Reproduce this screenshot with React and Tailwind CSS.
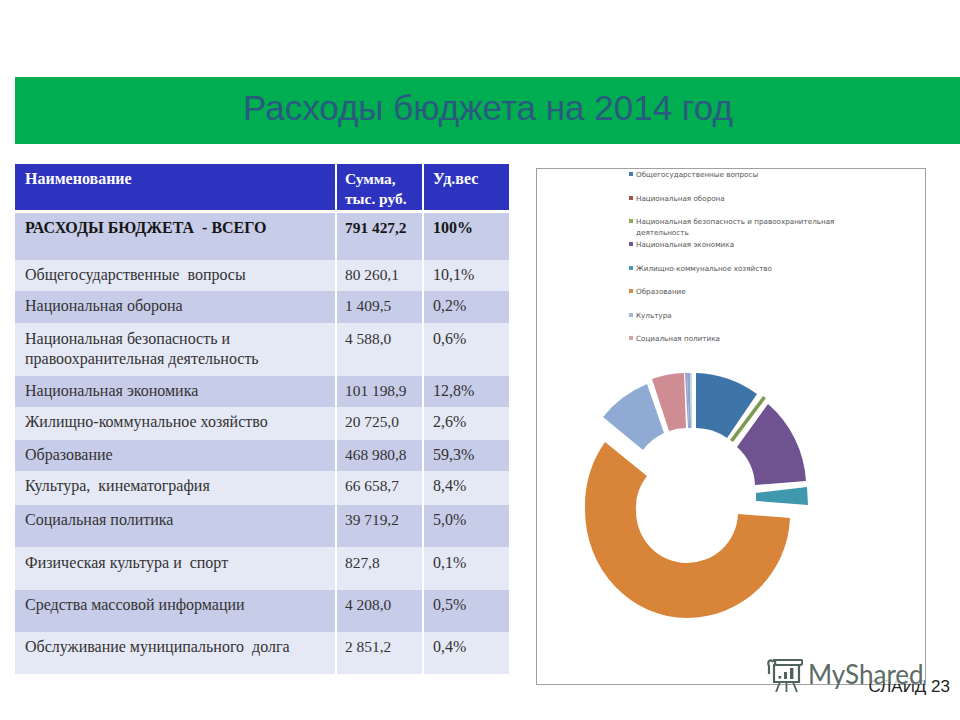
const rows = [
  { h: "h-[46px]", bg: "bg-[#2d33bf]", pt: "pt-[5px]", text: "text-white font-bold", cells: ["Наименование", "Сумма,\nтыс. руб.", "Уд.вес"] },
  { h: "h-[50px]", bg: "bg-[#c7cce8]", pt: "pt-[5px]", text: "text-[#161616] font-bold", border: "border-t-[3px]", cells: ["РАСХОДЫ БЮДЖЕТА  - ВСЕГО", "791 427,2", "100%"] },
  { h: "h-[31px]", bg: "bg-[#e5e8f5]", pt: "pt-[5px]", text: "text-[#333]", cells: ["Общегосударственные  вопросы", "80 260,1", "10,1%"] },
  { h: "h-[32px]", bg: "bg-[#c7cce8]", pt: "pt-[5px]", text: "text-[#333]", cells: ["Национальная оборона", "1 409,5", "0,2%"] },
  { h: "h-[53px]", bg: "bg-[#e5e8f5]", pt: "pt-[6px]", text: "text-[#333]", cells: ["Национальная безопасность и\nправоохранительная деятельность", "4 588,0", "0,6%"] },
  { h: "h-[31px]", bg: "bg-[#c7cce8]", pt: "pt-[5px]", text: "text-[#333]", cells: ["Национальная экономика", "101 198,9", "12,8%"] },
  { h: "h-[33px]", bg: "bg-[#e5e8f5]", pt: "pt-[5px]", text: "text-[#333]", cells: ["Жилищно-коммунальное хозяйство", "20 725,0", "2,6%"] },
  { h: "h-[31px]", bg: "bg-[#c7cce8]", pt: "pt-[5px]", text: "text-[#333]", cells: ["Образование", "468 980,8", "59,3%"] },
  { h: "h-[34px]", bg: "bg-[#e5e8f5]", pt: "pt-[5px]", text: "text-[#333]", cells: ["Культура,  кинематография", "66 658,7", "8,4%"] },
  { h: "h-[42px]", bg: "bg-[#c7cce8]", pt: "pt-[5px]", text: "text-[#333]", cells: ["Социальная политика", "39 719,2", "5,0%"] },
  { h: "h-[43px]", bg: "bg-[#e5e8f5]", pt: "pt-[6px]", text: "text-[#333]", cells: ["Физическая культура и  спорт", "827,8", "0,1%"] },
  { h: "h-[42px]", bg: "bg-[#c7cce8]", pt: "pt-[5px]", text: "text-[#333]", cells: ["Средства массовой информации", "4 208,0", "0,5%"] },
  { h: "h-[42px]", bg: "bg-[#e5e8f5]", pt: "pt-[5px]", text: "text-[#333]", cells: ["Обслуживание муниципального  долга", "2 851,2", "0,4%"] },
];

const cols = [
  "pl-[10px] text-[16px] border-r-2 border-white",
  "pl-[8px] text-[15.4px] border-r-2 border-white",
  "pl-[9px] text-[16px]",
];

const legend = [
  { c: "bg-[#4a7aa8]", t: "Общегосударственные вопросы", cls: "h-[23.5px]" },
  { c: "bg-[#a84f4c]", t: "Национальная оборона", cls: "h-[23.5px]" },
  { c: "bg-[#8fa85a]", t: "Национальная безопасность и правоохранительная\nдеятельность", cls: "h-[23px]" },
  { c: "bg-[#6f5a8c]", t: "Национальная экономика", cls: "h-[23.5px]" },
  { c: "bg-[#4b9bab]", t: "Жилищно-коммунальное хозяйство", cls: "h-[23.5px]" },
  { c: "bg-[#d9894a]", t: "Образование", cls: "h-[23.5px]" },
  { c: "bg-[#9fbbd6]", t: "Культура", cls: "h-[23.5px]" },
  { c: "bg-[#d6a3a3]", t: "Социальная политика", cls: "h-[16px]" },
];

function Donut() {
  return (
    <svg viewBox="575 365 240 260" className="block w-[240px] h-[260px] ml-[38px] mt-[16px]">
      <path fill="#3f74a8" d="M696 373 A110 110 0 0 1 757 394 L727 438 A54 54 0 0 0 696 428 Z" />
      <path fill="#7f9a50" d="M763 396 L766 398 L733 442 L730 440 Z" />
      <path fill="#6f5290" d="M768 404 A110 110 0 0 1 806 481 L755 485 A54 54 0 0 0 737 447 Z" />
      <path fill="#3f98ae" d="M807 487 L808 505 L756 501 L756 493 Z" />
      <path fill="#d98539" d="M790 518 A103 104 0 0 1 687 618 A102 108 0 0 1 585 510 A102 108 0 0 1 605 442 L647 476 A51 51 0 0 0 636 511 A51 52 0 0 0 686 563 A51 51 0 0 0 738 514 Z" />
      <path fill="#8fabd3" d="M603 417 A110 110 0 0 1 647 384 L664 433 A54 54 0 0 0 643 450 Z" />
      <path fill="#cf8d93" d="M652 379 A110 110 0 0 1 684 373 L686 428 A54 54 0 0 0 669 431 Z" />
      <path fill="#a39ec9" d="M685 373 L687 373 L689 428 L688 428 Z" />
      <path fill="#8aa9c9" d="M687 373 L690 373 L691 428 L689 428 Z" />
      <path fill="#c6d6e8" d="M690 373 L692 373 L692 428 L691 428 Z" />
    </svg>
  );
}

function Logo() {
  return (
    <div className="absolute left-[767px] top-[656px] w-[157px] h-[28px] bg-white/80 flex items-start gap-[5px]">
      <svg viewBox="0 0 36 36" className="w-[36px] h-[36px] shrink-0" fill="none" stroke="#4f625c" strokeWidth="2.2">
        <path d="M6 6 C3 2 0 6 2 10 L2 18 M6 4 L34 4 C36 4 36 9 33 9 L8 9 M6 4 C9 5 9 9 6 9" />
        <path d="M7 9 L7 26 L32 26 L32 9" />
        <path d="M13 26 L9 36 M26 26 L30 36 M19.5 26 L19.5 36" strokeWidth="1.8" />
        <rect x="11.5" y="20" width="2.6" height="2.6" fill="#4f625c" stroke="none" />
        <rect x="17" y="16" width="3" height="7" fill="#4f625c" stroke="none" />
        <rect x="23" y="12" width="3.4" height="11" fill="#4f625c" stroke="none" />
      </svg>
      <span className="font-['Lato',sans-serif] text-[26px] leading-[36px] text-[#5b6b66]">MyShared</span>
    </div>
  );
}

export default function App() {
  return (
    <div className="relative w-[960px] h-[720px] overflow-hidden bg-white pt-[77px] font-['Liberation_Sans',sans-serif]">
      <div className="ml-[15px] h-[67px] bg-[#00ad50] flex items-center pl-[228px] pb-[6px]">
        <h1 className="text-[35px] leading-none text-[#2a5a80] font-normal whitespace-nowrap">Расходы бюджета на 2014 год</h1>
      </div>
      <div className="flex items-start ml-[15px] mt-[20px]">
        <div className="w-[494px] font-['Liberation_Serif',serif] leading-[20px] whitespace-pre-wrap">
          {rows.map((r, i) => (
            <div key={i} className={`grid grid-cols-[322px_87px_85px] border-white ${r.h} ${r.border || ""} ${r.text}`}>
              {r.cells.map((c, j) => (
                <div key={j} className={`${r.bg} ${r.pt} ${cols[j]}`}>{c}</div>
              ))}
            </div>
          ))}
        </div>
        <div className="ml-[27px] mt-[4px] w-[390px] h-[517px] border border-[#a0a0a0] bg-white">
          <div className="pl-[92px] font-['DejaVu_Sans',sans-serif] text-[7.2px] leading-[11px] text-[#555] whitespace-pre-wrap">
            {legend.map((l, i) => (
              <div key={i} className={`flex gap-[3px] ${l.cls}`}>
                <span className={`w-[4px] h-[4px] mt-[3px] shrink-0 ${l.c}`} />
                <span>{l.t}</span>
              </div>
            ))}
          </div>
          <Donut />
        </div>
      </div>
      <div className="flex justify-end pr-[10px] -mt-[8px]">
        <span className="text-[17px] leading-[20px] text-[#222]">СЛАЙД 23</span>
      </div>
      <Logo />
    </div>
  );
}
